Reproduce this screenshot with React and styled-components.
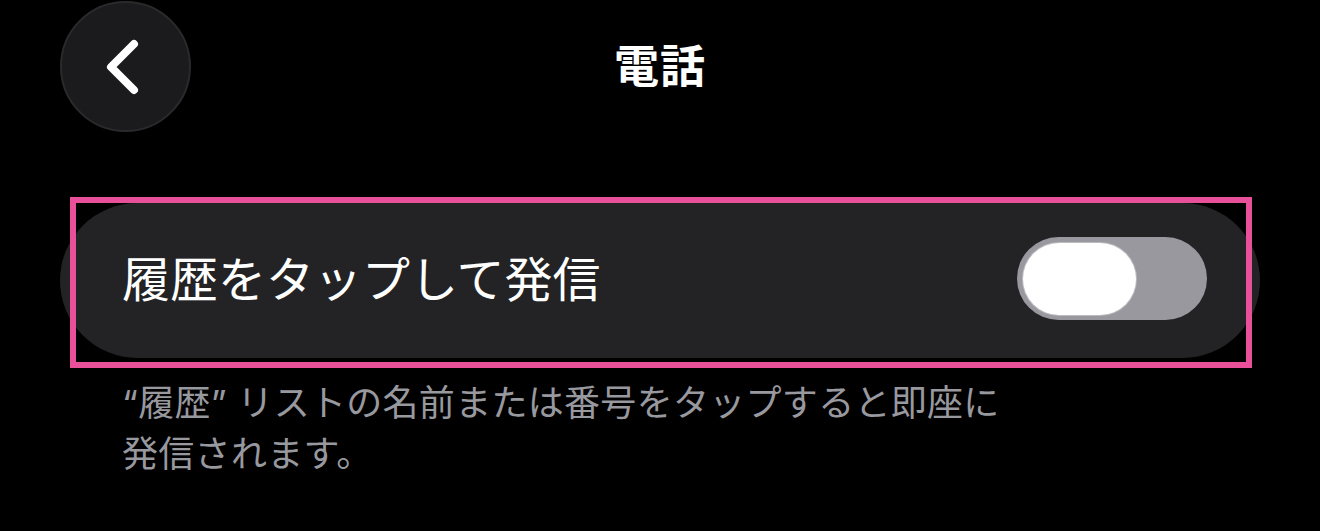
import React, { useState } from 'react';
import styled, { createGlobalStyle } from 'styled-components';

const GlobalStyle = createGlobalStyle`
  html, body {
    margin: 0;
    padding: 0;
    background: #000;
  }
  body {
    font-family: "Inter", "Noto Sans CJK JP", sans-serif;
    color: #fff;
  }
`;

function Chevron() {
  return (
    <svg width="40" height="60" viewBox="0 0 40 60" fill="none">
      <path
        d="M31 7 L8 30 L31 53"
        stroke="#fff"
        strokeWidth="8"
        strokeLinecap="round"
        strokeLinejoin="round"
      />
    </svg>
  );
}

function App() {
  const [on, setOn] = useState(false);

  return (
    <Page>
      <GlobalStyle />
      <Header>
        <BackButton aria-label="戻る">
          <Chevron />
        </BackButton>
        <Title>電話</Title>
        <span />
      </Header>

      <Card>
        <Label>履歴をタップして発信</Label>
        <Switch $on={on} onClick={() => setOn(!on)} aria-pressed={on}>
          <Knob $on={on} />
        </Switch>
        <Highlight />
      </Card>

      <Footnote>
        “履歴” リストの名前または番号をタップすると即座に
        <br />
        発信されます。
      </Footnote>
    </Page>
  );
}

const Page = styled.div`
  width: 1320px;
  height: 531px;
  box-sizing: border-box;
  padding: 1px 60px 0;
  overflow: hidden;
`;

const Header = styled.div`
  display: grid;
  grid-template-columns: 1fr auto 1fr;
  align-items: center;
  height: 131px;
`;

const BackButton = styled.button`
  width: 131px;
  height: 131px;
  border-radius: 50%;
  background: #1b1b1d;
  border: 2px solid #2a2a2c;
  display: flex;
  align-items: center;
  justify-content: center;
  padding: 0 6px 0 0;
  cursor: pointer;
`;

const Title = styled.h1`
  margin: 0;
  font-size: 45px;
  font-weight: 700;
  letter-spacing: 1px;
  line-height: 1;
  color: #fff;
`;

const Card = styled.div`
  position: relative;
  margin-top: 71px;
  height: 155px;
  border-radius: 78px;
  background: #232325;
  display: flex;
  align-items: center;
  justify-content: space-between;
  padding: 0 53px 0 62px;
`;

const Label = styled.div`
  font-size: 48px;
  font-weight: 400;
  color: #fff;
  line-height: 1;
  margin-top: -2px;
`;

const Switch = styled.button`
  width: 190px;
  height: 83px;
  border-radius: 42px;
  border: none;
  padding: 0 6px;
  display: flex;
  align-items: center;
  justify-content: ${(p) => (p.$on ? 'flex-end' : 'flex-start')};
  background: ${(p) => (p.$on ? '#34c759' : '#98989e')};
  cursor: pointer;
  margin-top: -4px;
`;

const Knob = styled.span`
  width: 113px;
  height: 72px;
  border-radius: 36px;
  background: #fff;
  box-shadow: 0 0 0 1px rgba(210, 210, 215, 0.6);
`;

const Highlight = styled.div`
  position: absolute;
  top: -6px;
  left: 10px;
  right: 8px;
  bottom: -10px;
  border: 6px solid #e8509a;
  pointer-events: none;
`;

const Footnote = styled.p`
  margin: 20px 0 0 62px;
  font-size: 36px;
  line-height: 51px;
  letter-spacing: 0.3px;
  color: #98989f;
`;

export default App;
